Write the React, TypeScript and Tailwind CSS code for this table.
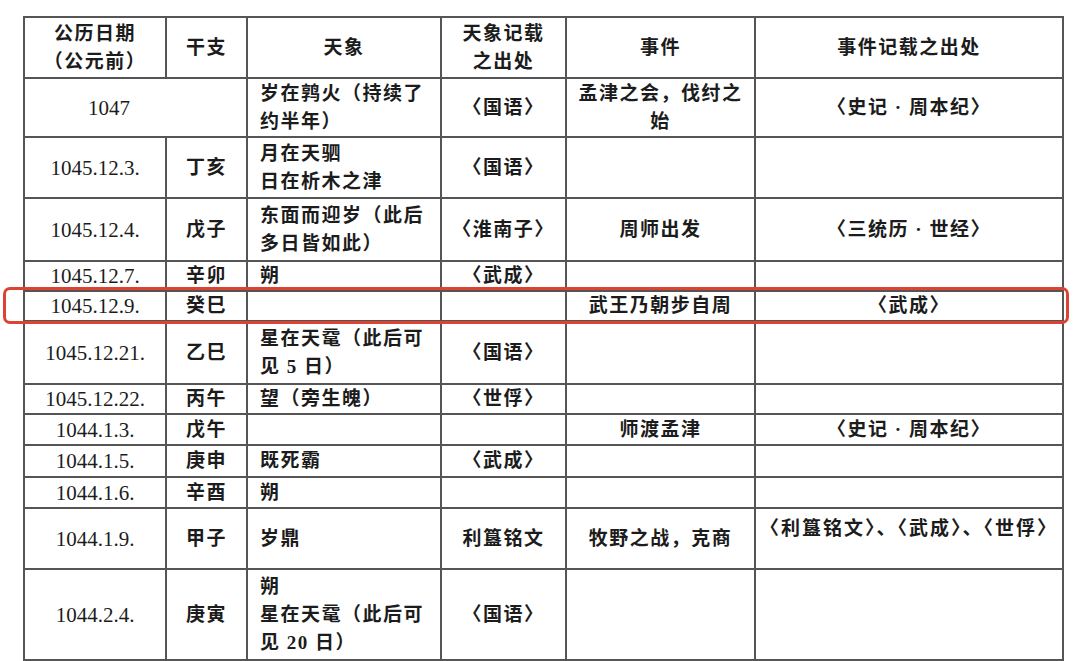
import React from "react";

type Row = {
  date: string;
  ganzhi?: string;
  merged?: boolean;
  sky: React.ReactNode;
  skySrc: string;
  event: React.ReactNode;
  eventSrc: string;
  h: number;
  eventSrcTop?: boolean;
};

const ROWS: Row[] = [
  { date: "1047", merged: true, sky: <>岁在鹑火（持续了<br />约半年）</>, skySrc: "〈国语〉", event: <>孟津之会，伐纣之<br />始</>, eventSrc: "〈史记 · 周本纪〉", h: 59 },
  { date: "1045.12.3.", ganzhi: "丁亥", sky: <>月在天驷<br />日在析木之津</>, skySrc: "〈国语〉", event: "", eventSrc: "", h: 61 },
  { date: "1045.12.4.", ganzhi: "戊子", sky: <>东面而迎岁（此后<br />多日皆如此）</>, skySrc: "〈淮南子〉", event: "周师出发", eventSrc: "〈三统历 · 世经〉", h: 63 },
  { date: "1045.12.7.", ganzhi: "辛卯", sky: "朔", skySrc: "〈武成〉", event: "", eventSrc: "", h: 29 },
  { date: "1045.12.9.", ganzhi: "癸巳", sky: "", skySrc: "", event: "武王乃朝步自周", eventSrc: "〈武成〉", h: 30 },
  { date: "1045.12.21.", ganzhi: "乙巳", sky: <>星在天鼋（此后可<br />见 5 日）</>, skySrc: "〈国语〉", event: "", eventSrc: "", h: 63 },
  { date: "1045.12.22.", ganzhi: "丙午", sky: "望（旁生魄）", skySrc: "〈世俘〉", event: "", eventSrc: "", h: 29 },
  { date: "1044.1.3.", ganzhi: "戊午", sky: "", skySrc: "", event: "师渡孟津", eventSrc: "〈史记 · 周本纪〉", h: 31 },
  { date: "1044.1.5.", ganzhi: "庚申", sky: "既死霸", skySrc: "〈武成〉", event: "", eventSrc: "", h: 32 },
  { date: "1044.1.6.", ganzhi: "辛酉", sky: "朔", skySrc: "", event: "", eventSrc: "", h: 31 },
  { date: "1044.1.9.", ganzhi: "甲子", sky: "岁鼎", skySrc: "利簋铭文", event: "牧野之战，克商", eventSrc: "〈利簋铭文〉、〈武成〉、〈世俘〉", h: 61, eventSrcTop: true },
  { date: "1044.2.4.", ganzhi: "庚寅", sky: <>朔<br />星在天鼋（此后可<br />见 20 日）</>, skySrc: "〈国语〉", event: "", eventSrc: "", h: 91 },
];

const cell = "border-2 border-[#555] p-0 align-middle";

export default function App() {
  return (
    <div
      className="relative h-[661px] w-[1080px] overflow-hidden bg-white text-[#1c1c1c]"
      style={{ fontFamily: '"Liberation Serif", "Noto Sans CJK SC", serif' }}
    >
      <table className="ml-[23px] mt-[16px] w-[1039px] table-fixed border-collapse text-[19px] leading-[28px] tracking-[1.5px]">
        <colgroup>
          <col className="w-[142px]" />
          <col className="w-[81px]" />
          <col className="w-[194px]" />
          <col className="w-[125px]" />
          <col className="w-[189px]" />
          <col className="w-[308px]" />
        </colgroup>
        <thead>
          <tr className="h-[61px]">
            <th className={`${cell} text-center font-semibold`}>公历日期<br />（公元前）</th>
            <th className={`${cell} text-center font-semibold`}>干支</th>
            <th className={`${cell} text-center font-semibold`}>天象</th>
            <th className={`${cell} text-center font-semibold`}>天象记载<br />之出处</th>
            <th className={`${cell} text-center font-semibold`}>事件</th>
            <th className={`${cell} text-center font-semibold`}>事件记载之出处</th>
          </tr>
        </thead>
        <tbody>
          {ROWS.map((r) => (
            <tr key={r.date} style={{ height: r.h }}>
              {r.merged ? (
                <td colSpan={2} className={`${cell} pl-[63px] text-left text-[21px] tracking-normal`}>{r.date}</td>
              ) : (
                <>
                  <td className={`${cell} text-center text-[21px] tracking-normal`}>{r.date}</td>
                  <td className={`${cell} text-center font-semibold`}>{r.ganzhi}</td>
                </>
              )}
              <td className={`${cell} pl-[12px] text-left font-semibold`}>{r.sky}</td>
              <td className={`${cell} text-center font-semibold`}>{r.skySrc}</td>
              <td className={`${cell} text-center font-semibold`}>{r.event}</td>
              <td
                className={`${cell} text-center font-semibold ${
                  r.eventSrcTop ? "!align-top pt-[6px] !tracking-[2px]" : ""
                }`}
              >
                {r.eventSrc}
              </td>
            </tr>
          ))}
        </tbody>
      </table>
      <div className="pointer-events-none absolute left-[3px] top-[287px] h-[37px] w-[1066px] rounded-[7px] border-[3px] border-[#dc4332]" />
    </div>
  );
}
